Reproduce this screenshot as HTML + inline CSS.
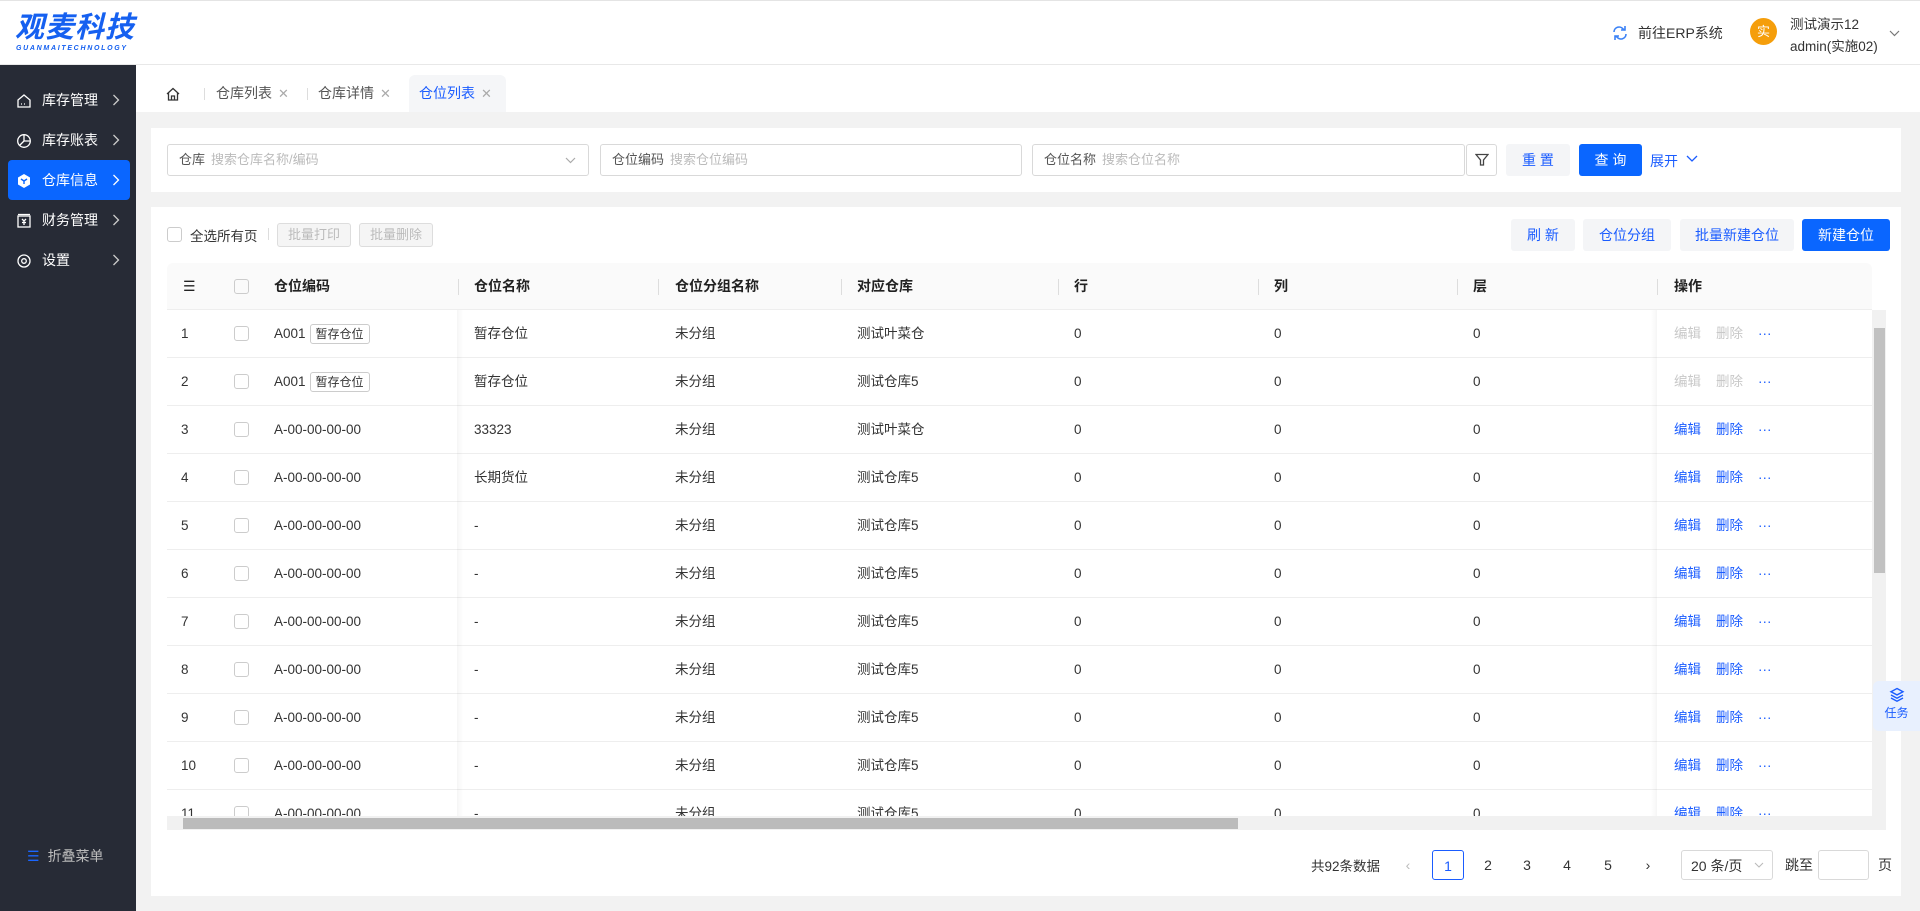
<!DOCTYPE html>
<html><head><meta charset="utf-8"><style>
*{box-sizing:border-box;margin:0;padding:0}
body{width:1920px;height:911px;overflow:hidden;font-family:"Liberation Sans","Noto Sans CJK SC",sans-serif;font-size:14px;color:#333;background:#f2f2f2;position:relative}
.abs{position:absolute}
.header{left:0;top:0;width:1920px;height:65px;background:#fff;border-bottom:1px solid #e8e8e8;border-top:1px solid #e4e4e4}
.side{left:0;top:65px;width:136px;height:846px;background:#272b36}
.mi{position:absolute;left:8px;width:122px;height:40px;color:#fff;font-size:14px;line-height:40px;padding-left:34px}
.mi .ar{position:absolute;right:10px;top:14px}
.mi.act{background:#0a66ff;border-radius:4px}
.mi svg.ic{position:absolute;left:8px;top:13px}
.tabs{left:136px;top:65px;width:1784px;height:47px;background:#fff}
.tab{position:absolute;top:10px;height:37px;line-height:37px;font-size:14px;color:#555}
.x{color:#aaa;margin-left:6px;font-size:13px}
.card{background:#fff}
.inp{position:absolute;top:144px;height:32px;border:1px solid #d9d9d9;border-radius:3px;line-height:30px;padding-left:11px;font-size:13px;color:#555}
.inp span{color:#bbb;margin-left:6px}
.btn{position:absolute;height:32px;line-height:32px;text-align:center;border-radius:3px;font-size:14px}
.g{background:#f4f5f7;color:#1a5cff}
.b{background:#0a66ff;color:#fff}
.th{position:absolute;top:263px;left:167px;width:1705px;height:47px;background:#fafafa;border-radius:6px 6px 0 0;border-bottom:1px solid #eee}
.th div,.row div{position:absolute;top:0}
.th div{line-height:47px;font-weight:bold;color:#222}
.sep{width:1px;height:16px;background:#ddd;top:16px!important}
.row{position:absolute;left:167px;width:1705px;height:48px;border-bottom:1px solid #eee;line-height:47px;font-size:13.5px}
.cb{width:15px;height:15px;border:1px solid #ccc;border-radius:3px;top:16px!important}
.tag{display:inline-block;border:1px solid #ccc;border-radius:3px;height:20px;line-height:18px;padding:0 5px;font-size:12px;margin-left:4px;vertical-align:middle}
.op{color:#1a5cff}
.dis{color:#c8c8c8}
.pg{position:absolute;top:850px;height:30px;line-height:30px;text-align:center;font-size:14px;color:#333}
</style></head><body>
<div class="abs header">
 <div class="abs" style="left:15px;top:7px;font-size:29px;line-height:34px;font-style:italic;font-weight:bold;color:#1560f0;letter-spacing:1px;font-family:'Noto Sans CJK SC',sans-serif">观麦科技</div>
 <div class="abs" style="left:16px;top:44px;font-size:7px;line-height:8px;font-style:italic;font-weight:bold;color:#1560f0;letter-spacing:1.7px">GUANMAITECHNOLOGY</div>
 <svg class="abs" style="left:1612px;top:24px" width="16" height="16" viewBox="0 0 16 16" fill="none" stroke="#3b82f6" stroke-width="1.6"><path d="M2 7a5 5 0 0 1 9-3l2 1M14 9a5 5 0 0 1-9 3l-2-1"/><path d="M13 1v4h-4M3 15v-4h4"/></svg>
 <div class="abs" style="left:1638px;top:22px;font-size:14px;color:#333">前往ERP系统</div>
 <div class="abs" style="left:1750px;top:17px;width:27px;height:27px;border-radius:50%;background:#f59e0b;color:#fff;text-align:center;line-height:27px;font-size:13px">实</div>
 <div class="abs" style="left:1790px;top:12px;font-size:13.5px">测试演示12</div>
 <div class="abs" style="left:1790px;top:34px;font-size:13.5px">admin(实施02)</div>
 <svg class="abs" style="left:1889px;top:29px" width="11" height="7" viewBox="0 0 11 7" fill="none" stroke="#777" stroke-width="1.2"><path d="M1 1l4.5 4.5L10 1"/></svg>
</div>
<div class="abs side">
 <div class="mi" style="top:15px"><svg class="ic" width="16" height="16" viewBox="0 0 16 16" fill="none" stroke="#fff" stroke-width="1.3"><path d="M2 7l6-5 6 5v7H2z"/><path d="M5 11h1M8 11h1"/></svg>库存管理<svg class="ar" width="8" height="12" viewBox="0 0 8 12" fill="none" stroke="#ccc" stroke-width="1.3"><path d="M1.5 1l5 5-5 5"/></svg></div>
 <div class="mi" style="top:55px"><svg class="ic" width="16" height="16" viewBox="0 0 16 16" fill="none" stroke="#fff" stroke-width="1.3"><circle cx="8" cy="8" r="6.3"/><path d="M8 1.7V8h6.3M8 8l-4.5 4.5"/></svg>库存账表<svg class="ar" width="8" height="12" viewBox="0 0 8 12" fill="none" stroke="#ccc" stroke-width="1.3"><path d="M1.5 1l5 5-5 5"/></svg></div>
 <div class="mi act" style="top:95px"><svg class="ic" width="16" height="16" viewBox="0 0 16 16"><path d="M8 1l6 3.5v7L8 15l-6-3.5v-7z" fill="#fff"/><path d="M5 6l3 2 3-2M8 8v3" stroke="#0a66ff" stroke-width="1.4" fill="none"/></svg>仓库信息<svg class="ar" width="8" height="12" viewBox="0 0 8 12" fill="none" stroke="#fff" stroke-width="1.3"><path d="M1.5 1l5 5-5 5"/></svg></div>
 <div class="mi" style="top:135px"><svg class="ic" width="16" height="16" viewBox="0 0 16 16" fill="none" stroke="#fff" stroke-width="1.3"><rect x="2" y="3" width="12" height="11"/><path d="M2 1.5h12M6 6l2 2 2-2M8 8v4M6 9.5h4"/></svg>财务管理<svg class="ar" width="8" height="12" viewBox="0 0 8 12" fill="none" stroke="#ccc" stroke-width="1.3"><path d="M1.5 1l5 5-5 5"/></svg></div>
 <div class="mi" style="top:175px"><svg class="ic" width="16" height="16" viewBox="0 0 16 16" fill="none" stroke="#fff" stroke-width="1.3"><circle cx="8" cy="8" r="2.3"/><circle cx="8" cy="8" r="6"/></svg>设置<svg class="ar" width="8" height="12" viewBox="0 0 8 12" fill="none" stroke="#ccc" stroke-width="1.3"><path d="M1.5 1l5 5-5 5"/></svg></div>
 <div class="abs" style="left:27px;top:781px;color:#bbb;font-size:14px"><span style="color:#1a66ff;margin-right:8px">☰</span>折叠菜单</div>
</div>
<div class="abs tabs">
 <svg class="abs" style="left:30px;top:22px" width="14" height="14" viewBox="0 0 14 14" fill="none" stroke="#333" stroke-width="1.3"><path d="M1 7l6-5.5L13 7M2.5 6v7h9V6M5.5 13V9h3v4"/></svg>
 <div class="abs" style="left:68px;top:23px;width:1px;height:12px;background:#ddd"></div>
 <div class="tab" style="left:80px;width:100px;padding-left:0">仓库列表<span class="x">✕</span></div>
 <div class="abs" style="left:171px;top:23px;width:1px;height:12px;background:#ddd"></div>
 <div class="tab" style="left:182px;width:90px;padding-left:0">仓库详情<span class="x">✕</span></div>
 <div class="tab" style="left:273px;width:97px;padding-left:10px;background:#f5f6f8;border-radius:6px 6px 0 0;color:#1a5cff">仓位列表<span class="x">✕</span></div>
</div>
<div class="abs card" style="left:151px;top:128px;width:1750px;height:64px"></div>
<div class="inp" style="left:167px;width:422px">仓库<span>搜索仓库名称/编码</span><svg style="position:absolute;right:12px;top:12px" width="11" height="7" viewBox="0 0 11 7" fill="none" stroke="#aaa" stroke-width="1.2"><path d="M1 1l4.5 4.5L10 1"/></svg></div>
<div class="inp" style="left:600px;width:422px">仓位编码<span>搜索仓位编码</span></div>
<div class="inp" style="left:1032px;width:433px">仓位名称<span>搜索仓位名称</span></div>
<div class="btn" style="left:1466px;top:144px;width:31px;border:1px solid #d9d9d9"><svg width="14" height="14" viewBox="0 0 14 14" fill="none" stroke="#444" stroke-width="1.3" style="margin-top:8px"><path d="M1 1.5h12L8.5 7v5h-3V7z"/></svg></div>
<div class="btn g" style="left:1506px;top:144px;width:64px">重 置</div>
<div class="btn b" style="left:1579px;top:144px;width:63px">查 询</div>
<div class="abs" style="left:1650px;top:151px;color:#1a5cff">展开</div>
<svg class="abs" style="left:1686px;top:155px" width="12" height="8" viewBox="0 0 12 8" fill="none" stroke="#1a5cff" stroke-width="1.3"><path d="M1 1l5 5 5-5"/></svg>

<div class="abs card" style="left:151px;top:207px;width:1750px;height:689px"></div>
<div class="abs" style="left:167px;top:227px;width:15px;height:15px;border:1px solid #ccc;border-radius:3px"></div>
<div class="abs" style="left:190px;top:225px;font-size:13.5px">全选所有页</div>
<div class="abs" style="left:268px;top:228px;width:1px;height:12px;background:#ddd"></div>
<div class="btn" style="left:277px;top:223px;width:74px;height:24px;line-height:22px;border:1px solid #ddd;background:#f5f5f5;color:#bbb;font-size:13px">批量打印</div>
<div class="btn" style="left:359px;top:223px;width:74px;height:24px;line-height:22px;border:1px solid #ddd;background:#f5f5f5;color:#bbb;font-size:13px">批量删除</div>
<div class="btn g" style="left:1511px;top:219px;width:64px">刷 新</div>
<div class="btn g" style="left:1583px;top:219px;width:88px">仓位分组</div>
<div class="btn g" style="left:1680px;top:219px;width:114px">批量新建仓位</div>
<div class="btn b" style="left:1802px;top:219px;width:88px">新建仓位</div>

<div class="th">
 <div style="left:16px;font-weight:normal">☰</div>
 <div class="cb" style="left:67px"></div>
 <div style="left:107px">仓位编码</div><div class="sep" style="left:291px"></div>
 <div style="left:307px">仓位名称</div>
 <div class="sep" style="left:491px"></div><div style="left:508px">仓位分组名称</div>
 <div class="sep" style="left:674px"></div><div style="left:690px">对应仓库</div>
 <div class="sep" style="left:891px"></div><div style="left:907px">行</div>
 <div class="sep" style="left:1091px"></div><div style="left:1107px">列</div>
 <div class="sep" style="left:1290px"></div><div style="left:1306px">层</div>
 <div class="sep" style="left:1490px"></div><div style="left:1507px">操作</div>
</div>
<div class="abs" style="left:167px;top:310px;width:1705px;height:506px;overflow:hidden">
<div style="position:relative;top:-310px;left:-167px">
 <div class="row" style="top:310px"><div style="left:14px">1</div><div class="cb" style="left:67px"></div><div style="left:107px">A001<span class="tag">暂存仓位</span></div><div style="left:307px">暂存仓位</div><div style="left:508px">未分组</div><div style="left:690px">测试叶菜仓</div><div style="left:907px">0</div><div style="left:1107px">0</div><div style="left:1306px">0</div><div style="left:1507px" class="dis">编辑&nbsp;&nbsp;&nbsp;&nbsp;删除&nbsp;&nbsp;&nbsp;&nbsp;<span class="op">···</span></div></div>
 <div class="row" style="top:358px"><div style="left:14px">2</div><div class="cb" style="left:67px"></div><div style="left:107px">A001<span class="tag">暂存仓位</span></div><div style="left:307px">暂存仓位</div><div style="left:508px">未分组</div><div style="left:690px">测试仓库5</div><div style="left:907px">0</div><div style="left:1107px">0</div><div style="left:1306px">0</div><div style="left:1507px" class="dis">编辑&nbsp;&nbsp;&nbsp;&nbsp;删除&nbsp;&nbsp;&nbsp;&nbsp;<span class="op">···</span></div></div>
 <div class="row" style="top:406px"><div style="left:14px">3</div><div class="cb" style="left:67px"></div><div style="left:107px">A-00-00-00-00</div><div style="left:307px">33323</div><div style="left:508px">未分组</div><div style="left:690px">测试叶菜仓</div><div style="left:907px">0</div><div style="left:1107px">0</div><div style="left:1306px">0</div><div style="left:1507px" class="op">编辑&nbsp;&nbsp;&nbsp;&nbsp;删除&nbsp;&nbsp;&nbsp;&nbsp;···</div></div>
 <div class="row" style="top:454px"><div style="left:14px">4</div><div class="cb" style="left:67px"></div><div style="left:107px">A-00-00-00-00</div><div style="left:307px">长期货位</div><div style="left:508px">未分组</div><div style="left:690px">测试仓库5</div><div style="left:907px">0</div><div style="left:1107px">0</div><div style="left:1306px">0</div><div style="left:1507px" class="op">编辑&nbsp;&nbsp;&nbsp;&nbsp;删除&nbsp;&nbsp;&nbsp;&nbsp;···</div></div>
 <div class="row" style="top:502px"><div style="left:14px">5</div><div class="cb" style="left:67px"></div><div style="left:107px">A-00-00-00-00</div><div style="left:307px">-</div><div style="left:508px">未分组</div><div style="left:690px">测试仓库5</div><div style="left:907px">0</div><div style="left:1107px">0</div><div style="left:1306px">0</div><div style="left:1507px" class="op">编辑&nbsp;&nbsp;&nbsp;&nbsp;删除&nbsp;&nbsp;&nbsp;&nbsp;···</div></div>
 <div class="row" style="top:550px"><div style="left:14px">6</div><div class="cb" style="left:67px"></div><div style="left:107px">A-00-00-00-00</div><div style="left:307px">-</div><div style="left:508px">未分组</div><div style="left:690px">测试仓库5</div><div style="left:907px">0</div><div style="left:1107px">0</div><div style="left:1306px">0</div><div style="left:1507px" class="op">编辑&nbsp;&nbsp;&nbsp;&nbsp;删除&nbsp;&nbsp;&nbsp;&nbsp;···</div></div>
 <div class="row" style="top:598px"><div style="left:14px">7</div><div class="cb" style="left:67px"></div><div style="left:107px">A-00-00-00-00</div><div style="left:307px">-</div><div style="left:508px">未分组</div><div style="left:690px">测试仓库5</div><div style="left:907px">0</div><div style="left:1107px">0</div><div style="left:1306px">0</div><div style="left:1507px" class="op">编辑&nbsp;&nbsp;&nbsp;&nbsp;删除&nbsp;&nbsp;&nbsp;&nbsp;···</div></div>
 <div class="row" style="top:646px"><div style="left:14px">8</div><div class="cb" style="left:67px"></div><div style="left:107px">A-00-00-00-00</div><div style="left:307px">-</div><div style="left:508px">未分组</div><div style="left:690px">测试仓库5</div><div style="left:907px">0</div><div style="left:1107px">0</div><div style="left:1306px">0</div><div style="left:1507px" class="op">编辑&nbsp;&nbsp;&nbsp;&nbsp;删除&nbsp;&nbsp;&nbsp;&nbsp;···</div></div>
 <div class="row" style="top:694px"><div style="left:14px">9</div><div class="cb" style="left:67px"></div><div style="left:107px">A-00-00-00-00</div><div style="left:307px">-</div><div style="left:508px">未分组</div><div style="left:690px">测试仓库5</div><div style="left:907px">0</div><div style="left:1107px">0</div><div style="left:1306px">0</div><div style="left:1507px" class="op">编辑&nbsp;&nbsp;&nbsp;&nbsp;删除&nbsp;&nbsp;&nbsp;&nbsp;···</div></div>
 <div class="row" style="top:742px"><div style="left:14px">10</div><div class="cb" style="left:67px"></div><div style="left:107px">A-00-00-00-00</div><div style="left:307px">-</div><div style="left:508px">未分组</div><div style="left:690px">测试仓库5</div><div style="left:907px">0</div><div style="left:1107px">0</div><div style="left:1306px">0</div><div style="left:1507px" class="op">编辑&nbsp;&nbsp;&nbsp;&nbsp;删除&nbsp;&nbsp;&nbsp;&nbsp;···</div></div>
 <div class="row" style="top:790px"><div style="left:14px">11</div><div class="cb" style="left:67px"></div><div style="left:107px">A-00-00-00-00</div><div style="left:307px">-</div><div style="left:508px">未分组</div><div style="left:690px">测试仓库5</div><div style="left:907px">0</div><div style="left:1107px">0</div><div style="left:1306px">0</div><div style="left:1507px" class="op">编辑&nbsp;&nbsp;&nbsp;&nbsp;删除&nbsp;&nbsp;&nbsp;&nbsp;···</div></div>
</div>
 <div class="abs" style="left:290px;top:0;width:6px;height:506px;background:linear-gradient(90deg,rgba(0,0,0,.04),transparent)"></div>
 <div class="abs" style="left:1484px;top:0;width:6px;height:506px;background:linear-gradient(270deg,rgba(0,0,0,.04),transparent)"></div>
</div>
<div class="abs" style="left:1872px;top:310px;width:14px;height:506px;background:#f1f1f1"></div>
<div class="abs" style="left:1874px;top:328px;width:11px;height:245px;background:#c1c1c1"></div>
<div class="abs" style="left:167px;top:816px;width:1719px;height:14px;background:#f1f1f1"></div>
<div class="abs" style="left:183px;top:818px;width:1055px;height:11px;background:#bbb"></div>

<div class="abs" style="left:1311px;top:855px;font-size:13.5px">共92条数据</div>
<div class="pg" style="left:1398px;width:20px;color:#bbb">‹</div>
<div class="pg" style="left:1432px;width:32px;border:1px solid #1a5cff;border-radius:3px;color:#1a5cff">1</div>
<div class="pg" style="left:1472px;width:32px">2</div>
<div class="pg" style="left:1511px;width:32px">3</div>
<div class="pg" style="left:1551px;width:32px">4</div>
<div class="pg" style="left:1592px;width:32px">5</div>
<div class="pg" style="left:1638px;width:20px">›</div>
<div class="pg" style="left:1681px;width:92px;border:1px solid #d9d9d9;border-radius:3px;text-align:left;padding-left:9px">20 条/页</div>
<svg class="abs" style="left:1754px;top:862px" width="10" height="6" viewBox="0 0 10 6" fill="none" stroke="#bbb" stroke-width="1.1"><path d="M1 1l4 4 4-4"/></svg>
<div class="pg" style="left:1782px;width:34px">跳至</div>
<div class="pg" style="left:1818px;width:51px;border:1px solid #d9d9d9;border-radius:3px"></div>
<div class="pg" style="left:1876px;width:18px">页</div>

<div class="abs" style="left:1873px;top:681px;width:47px;height:50px;background:#e8f0fe;border-radius:6px 0 0 6px;text-align:center;color:#1a5cff;font-size:12px">
 <svg style="margin-top:6px" width="16" height="16" viewBox="0 0 16 16" fill="none" stroke="#1a5cff" stroke-width="1.4"><path d="M8 1.5l6 3.2-6 3.2-6-3.2z"/><path d="M2 8l6 3.2L14 8M2 11l6 3.2 6-3.2"/></svg>
 <div style="margin-top:-2px">任务</div>
</div>
</body></html>
